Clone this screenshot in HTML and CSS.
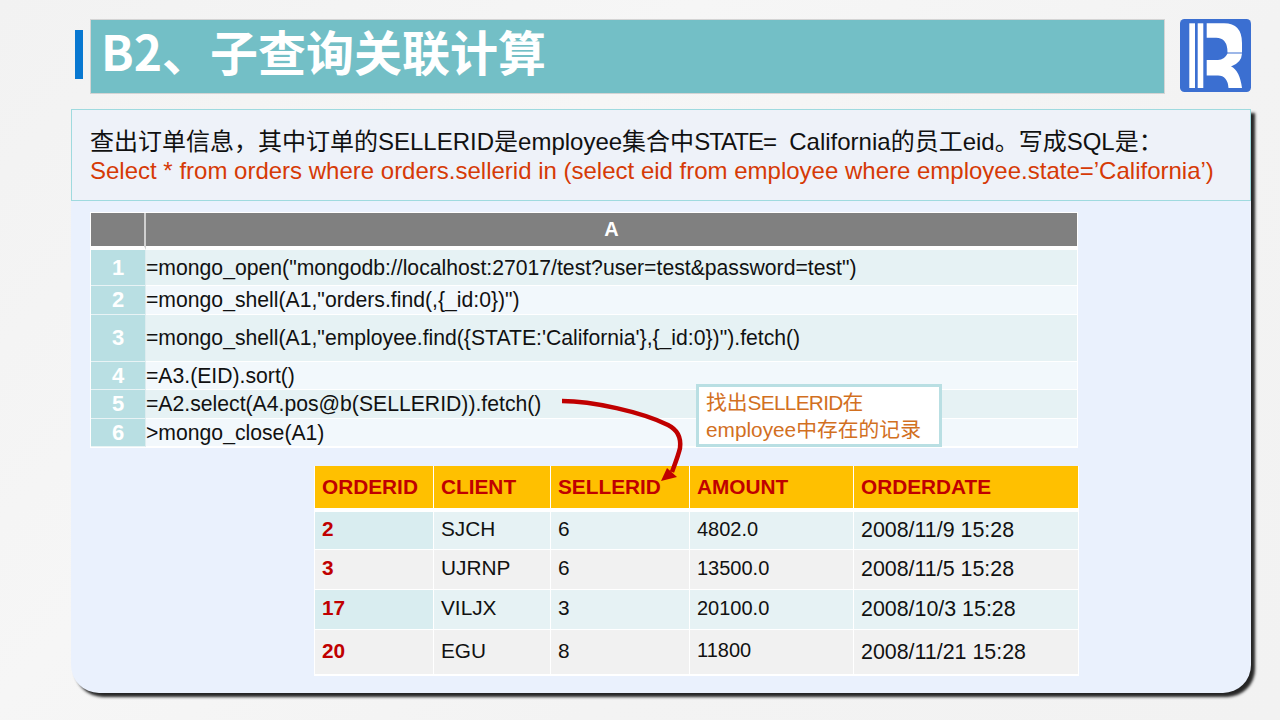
FILE: index.html
```html
<!DOCTYPE html>
<html lang="zh-CN">
<head>
<meta charset="utf-8">
<title>B2、子查询关联计算</title>
<link rel="stylesheet" href="styles.css">
</head>
<body>
<main class="slide">
  <header class="head">
    <span class="accent"></span>
    <h1 class="title">B2、子查询关联计算</h1>
    <svg class="logo" viewBox="0 0 71 73" width="71" height="73" aria-label="logo">
      <rect x="0" y="0" width="71" height="73" rx="4.500" fill="#3b6fd1"/>
      <rect x="9.300" y="4.300" width="5.700" height="64.700" fill="#fff"/>
      <rect x="17.700" y="4.300" width="5.600" height="64.700" fill="#fff"/>
      <path fill="#fff" d="M26.700 4.300H44Q62 4.300 62 24V33.500H47.500Q47.500 18.700 36 18.700H26.700Z"/>
      <path fill="#fff" d="M26.700 41H38Q44.500 41 47.500 34.600H62Q61.500 44 51 47.500Q59.500 51 62 69H48.500Q47.500 56.500 38 56.500H26.700Z"/>
    </svg>
  </header>
  <section class="panel">
    <div class="note">
      <p class="note-line">查出订单信息，其中订单的SELLERID是employee集合中<span class="state">STATE=</span>&nbsp; California的员工eid。写成SQL是：</p>
      <p class="note-line sql">Select * from orders where orders.sellerid in (select eid from employee where employee.state=’California’)</p>
    </div>
    <div class="grid-wrap">
      <div class="code">
        <div class="hc"></div><div class="hc hc-a">A</div>
        <div class="num">1</div><div class="cell odd">=mongo_open("mongodb://localhost:27017/test?user=test&amp;password=test")</div>
        <div class="num">2</div><div class="cell even">=mongo_shell(A1,"orders.find(,{_id:0})")</div>
        <div class="num">3</div><div class="cell odd">=mongo_shell(A1,"employee.find({STATE:'California'},{_id:0})").fetch()</div>
        <div class="num">4</div><div class="cell even">=A3.(EID).sort()</div>
        <div class="num">5</div><div class="cell odd">=A2.select(A4.pos@b(SELLERID)).fetch()</div>
        <div class="num">6</div><div class="cell even">&gt;mongo_close(A1)</div>
      </div>
      <div class="result">
        <div class="th">ORDERID</div><div class="th">CLIENT</div><div class="th">SELLERID</div><div class="th">AMOUNT</div><div class="th">ORDERDATE</div>
        <div class="td key tint">2</div><div class="td band short">SJCH</div><div class="td band short">6</div><div class="td band amt">4802.0</div><div class="td band">2008/11/9 15:28</div>
        <div class="td key">3</div><div class="td short">UJRNP</div><div class="td short">6</div><div class="td amt">13500.0</div><div class="td">2008/11/5 15:28</div>
        <div class="td key tint">17</div><div class="td band short">VILJX</div><div class="td band short">3</div><div class="td band amt">20100.0</div><div class="td band">2008/10/3 15:28</div>
        <div class="td key">20</div><div class="td short">EGU</div><div class="td short">8</div><div class="td amt">11800</div><div class="td">2008/11/21 15:28</div>
      </div>
      <div class="callout">找出<span class="tight">SELLERID</span>在<br>employee中存在的记录</div>
      <svg class="arrow" viewBox="0 0 130 90" width="130" height="90" aria-hidden="true">
        <path d="M0 3C30 3 80 14 106 27C118 33 119 42 118 50C117 55 113 66 110 74" fill="none" stroke="#c00000" stroke-width="4.500"/>
        <path d="M99 83L105 70L115 79Z" fill="#c00000"/>
      </svg>
    </div>
  </section>
</main>
</body>
</html>
```
FILE: styles.css
```css
* { box-sizing: border-box; }
html, body { margin: 0; padding: 0; }
body {
  width: 1280px;
  height: 720px;
  overflow: hidden;
  background: linear-gradient(135deg, #f2f2f2 0%, #f6f6f6 35%, #f3f3f3 65%, #f2f2f2 100%);
  font-family: "Liberation Sans", "Noto Sans CJK SC", sans-serif;
  color: #000;
}
.slide { width: 1280px; height: 720px; padding: 19px 29px 27px 71px; display: flex; flex-direction: column; }
.head { display: flex; align-items: flex-start; height: 90px; flex: none; }
.accent { width: 8px; height: 49px; margin: 11px 7px 0 4px; background: #0878d1; flex: none; }
.title {
  margin: 0;
  width: 1075px;
  height: 75px;
  background: #73bfc6;
  border: 1px solid #d4d4d4;
  color: #fff;
  font-family: "Noto Sans CJK SC", sans-serif;
  font-size: 48px;
  line-height: 61px;
  font-weight: 700;
  padding-left: 10px;
  white-space: nowrap;
  flex: none;
}
.logo { margin-left: 15px; flex: none; }
.panel {
  flex: 1;
  background: #eaf1fd;
  border-radius: 0 0 28px 28px;
  box-shadow: 4px 4px 3px rgba(0,0,0,0.85);
  display: flex;
  flex-direction: column;
}
.note {
  height: 92px;
  background: #eef2f9;
  border: 1px solid #9fdadf;
  padding: 17px 18px 0;
  flex: none;
}
.note-line { margin: 0; font-size: 24px; line-height: 29px; white-space: nowrap; color: #111; }
.state { letter-spacing: -1px; }
.sql { color: #d63a06; }
.grid-wrap { position: relative; flex: 1; padding: 11px 0 0 19px; }
.code {
  width: 988px;
  display: grid;
  grid-template-columns: 55px 1fr;
  grid-template-rows: 37px 36px 29px 47px 28px 29px 28px;
  background: #fff;
  border: 1px solid #fff;
  font-size: 21.200px;
}
.hc { background: #808080; border-bottom: 4px solid #fff; border-right: 2px solid #d0d0d0; }
.hc-a { border-right: 0; color: #fff; font-weight: 700; text-align: center; line-height: 33px; font-size: 20px; }
.num {
  background: #b9dfe3;
  color: #fff;
  font-weight: 700;
  font-size: 22px;
  border-bottom: 1px solid #e8f3f5;
  border-right: 1px solid #dcecef;
  display: flex;
  align-items: center;
  justify-content: center;
}
.cell { display: flex; align-items: center; border-bottom: 1px solid #fff; white-space: nowrap; color: #111; }
.odd { background: #e6f2f4; }
.even { background: #f2f8fc; }
.result {
  width: 765px;
  margin: 18px 0 0 224px;
  display: grid;
  grid-template-columns: 119px 117px 139px 164px 225px;
  grid-template-rows: 46px 38px 40px 40px 45px;
  background: #fff;
  border: 0 solid #fff;
  border-width: 0 1px 1px 1px;
  font-size: 21.400px;
}
.th {
  background: #ffc000;
  color: #c00000;
  font-weight: 700;
  font-size: 20.800px;
  border-right: 1px solid #fff;
  border-bottom: 4px solid #fff;
  padding-left: 7px;
  display: flex;
  align-items: center;
  white-space: nowrap;
}
.td {
  background: #f1f1f1;
  border-right: 1px solid #fff;
  border-bottom: 1px solid #fff;
  padding-left: 7px;
  display: flex;
  align-items: center;
  white-space: nowrap;
  color: #111;
}
.band { background: #e6f2f4; }
.short { font-size: 20.800px; padding-bottom: 3px; }
.amt { font-size: 20px; padding-bottom: 3px; }
.key { color: #c00000; font-weight: 700; font-size: 20.800px; padding-bottom: 3px; }
.tint { background: #d9edf0; }
.callout {
  position: absolute;
  left: 625px;
  top: 183px;
  width: 246px;
  height: 63px;
  background: #fff;
  border: 3px solid #b9dfe3;
  padding: 2px 0 0 7px;
  font-size: 20.800px;
  line-height: 27px;
  color: #d2701f;
  white-space: nowrap;
}
.tight { letter-spacing: -0.700px; }
.arrow { position: absolute; left: 491px; top: 197px; }
```
